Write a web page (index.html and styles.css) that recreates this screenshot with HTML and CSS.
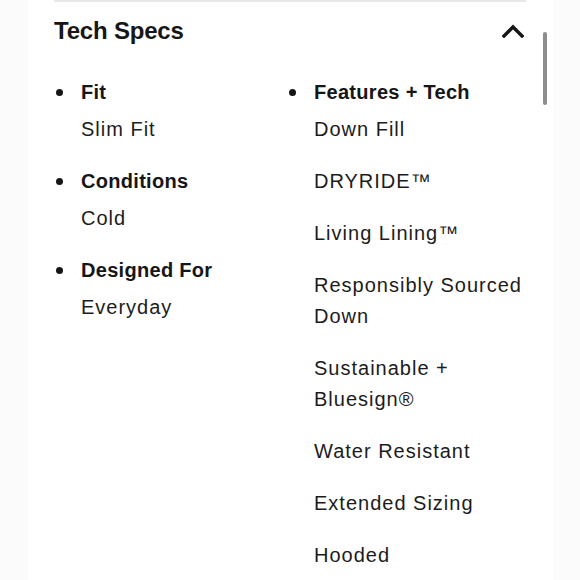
FILE: index.html
```html
<!DOCTYPE html>
<html lang="en">
<head>
<meta charset="utf-8">
<title>Tech Specs</title>
<link rel="stylesheet" href="styles.css">
</head>
<body>
<div class="panel">
  <div class="rule"></div>
  <div class="header">
    <h2 class="title">Tech Specs</h2>
    <svg class="chevron" width="22" height="14" viewBox="0 0 22 14" aria-hidden="true">
      <path d="M2 12 L11 3 L20 12" fill="none" stroke="#161616" stroke-width="3.4" stroke-linecap="square" stroke-linejoin="miter"/>
    </svg>
  </div>
  <div class="specs">
    <div class="col">
      <div class="item">
        <span class="dot"></span>
        <div class="body">
          <div class="label">Fit</div>
          <div class="values"><div class="value">Slim Fit</div></div>
        </div>
      </div>
      <div class="item">
        <span class="dot"></span>
        <div class="body">
          <div class="label">Conditions</div>
          <div class="values"><div class="value">Cold</div></div>
        </div>
      </div>
      <div class="item">
        <span class="dot"></span>
        <div class="body">
          <div class="label">Designed For</div>
          <div class="values"><div class="value">Everyday</div></div>
        </div>
      </div>
    </div>
    <div class="col">
      <div class="item">
        <span class="dot"></span>
        <div class="body">
          <div class="label">Features + Tech</div>
          <div class="values">
            <div class="value">Down Fill</div>
            <div class="value">DRYRIDE™</div>
            <div class="value">Living Lining™</div>
            <div class="value">Responsibly Sourced<br>Down</div>
            <div class="value">Sustainable +<br>Bluesign®</div>
            <div class="value">Water Resistant</div>
            <div class="value">Extended Sizing</div>
            <div class="value">Hooded</div>
          </div>
        </div>
      </div>
    </div>
  </div>
  <div class="scrollbar"></div>
</div>
</body>
</html>
```
FILE: styles.css
```css
html, body {
  margin: 0;
  padding: 0;
}
body {
  background: #fbfbfb;
  font-family: "Liberation Sans", Arial, Helvetica, sans-serif;
  color: #1a1a1a;
  overflow: hidden;
}
.panel {
  position: relative;
  margin-left: 28px;
  width: 525px;
  min-height: 580px;
  background: #ffffff;
  padding: 0 27px 0 26px;
  box-sizing: border-box;
}
.rule {
  height: 2px;
  background: #e8e8e8;
}
.header {
  height: 58px;
  display: flex;
  align-items: center;
  justify-content: space-between;
}
.title {
  margin: 0;
  font-size: 24px;
  line-height: 28px;
  font-weight: 700;
  letter-spacing: -0.2px;
  color: #161616;
}
.chevron {
  display: block;
  margin-right: 2px;
}
.specs {
  display: grid;
  grid-template-columns: 233px 1fr;
  padding-top: 20px;
}
.col {
  display: flex;
  flex-direction: column;
  gap: 24px;
}
.item {
  display: flex;
  align-items: flex-start;
}
.dot {
  flex: none;
  width: 7px;
  height: 7px;
  border-radius: 50%;
  background: #161616;
  margin: 8.5px 18px 0 2px;
}
.body {
  display: flex;
  flex-direction: column;
  gap: 10px;
}
.label {
  font-size: 20px;
  line-height: 24px;
  font-weight: 700;
  letter-spacing: 0.3px;
  color: #161616;
  white-space: nowrap;
}
.values {
  display: flex;
  flex-direction: column;
  gap: 21px;
}
.value {
  font-size: 20px;
  line-height: 31px;
  letter-spacing: 1px;
  color: #1c1c1c;
  white-space: nowrap;
}
.scrollbar {
  position: absolute;
  left: 515px;
  top: 32px;
  width: 4px;
  height: 73px;
  border-radius: 2px;
  background: #8d8d8d;
}
```
